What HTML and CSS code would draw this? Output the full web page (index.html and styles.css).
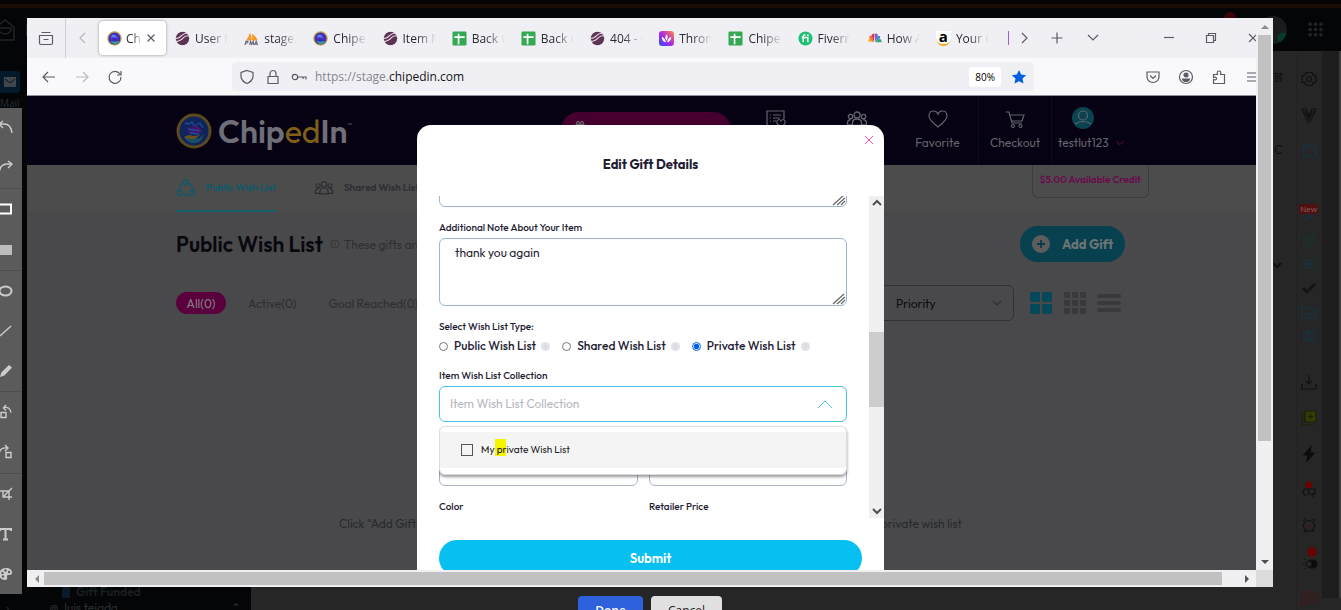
FILE: index.html
```html
<!DOCTYPE html>
<html lang="en">
<head>
<meta charset="utf-8">
<title>ChipedIn – Edit Gift Details</title>
<link rel="stylesheet" href="styles.css">
</head>
<body>
<svg class="defs" aria-hidden="true">
  <defs>
    <symbol id="fav-chip" viewBox="0 0 16 16"><circle cx="8" cy="8" r="7" fill="#3b2db0" stroke="#b9a24a" stroke-width="1.4"/><path d="M4 5q3-3 7 0l1 4q-4-3-8 0z" fill="#6a3fe0"/><path d="M4 10q4 3 9 0-1 3-4 3.600-4 0-5-3.600z" fill="#2fb0a0"/><path d="M5 5l4 1" stroke="#36b9e8" stroke-width="1.500"/></symbol>
    <symbol id="fav-ball" viewBox="0 0 16 16"><circle cx="8" cy="8" r="7.200" fill="#5d3354"/><path d="M.5 8q4 0 6.500-3t7-2.500M.5 11q5 0 8-3.500t7-2" fill="none" stroke="#e7d9e5" stroke-width="1.200"/></symbol>
    <symbol id="fav-sheet" viewBox="0 0 16 16"><rect x=".5" y=".5" width="15" height="15" rx="1.500" fill="#34a853"/><path d="M7 3v11M2.500 6.500h11" stroke="#fff" stroke-width="1.800"/></symbol>
    <symbol id="fav-pma" viewBox="0 0 16 16"><path d="M2 10Q5 7 6 2q3 3 2 8zM8.500 10Q9 6 8.500 3q5 3 6 7z" fill="#f59a23"/><path d="M1 15l1-4h2q1 2-2 2M6 15l1-4 1 3 2-3v4M11 15l2-4 1.500 4M12 14h2" fill="none" stroke="#6b6b80" stroke-width="1.200"/></symbol>
    <symbol id="fav-throne" viewBox="0 0 16 16"><linearGradient id="tg" x1="0" y1="1" x2="1" y2="0"><stop offset="0" stop-color="#2b4bff"/><stop offset=".5" stop-color="#b02be0"/><stop offset="1" stop-color="#ff8a3c"/></linearGradient><rect width="16" height="16" rx="3.500" fill="url(#tg)"/><path d="M8 3.500q2.500 3 0 7-2.500-4 0-7zM3 6.500q3 .5 4.500 5.500Q3 12 3 6.500zM13 6.500q-3 .5-4.500 5.500Q13 12 13 6.500z" fill="#fff"/></symbol>
    <symbol id="fav-fiverr" viewBox="0 0 16 16"><circle cx="8" cy="8" r="7.500" fill="#1dbf73"/><path d="M5.500 12V6q0-2 2.500-2M4 7h6.500v5" fill="none" stroke="#fff" stroke-width="1.500"/><circle cx="10.500" cy="4.500" r="1" fill="#fff"/></symbol>
    <symbol id="fav-nbc" viewBox="0 0 16 16"><path d="M7 12L1 11q0-3 3-3z" fill="#f0b323"/><path d="M7 12L2 7q1-3 3.500-2z" fill="#f0743a"/><path d="M7.500 12L5 5q1-3 3-2z" fill="#d8324a"/><path d="M8.500 12L8.500 3q3-1 3 2z" fill="#7a5bd0"/><path d="M9 12l2.500-7q3 0 2.500 2z" fill="#2f80d8"/><path d="M9 12l4-4q3 1 2.500 4z" fill="#2fa86a"/></symbol>
    <symbol id="chev" viewBox="0 0 12 12"><path d="M2 4l4 4 4-4" fill="none" stroke="currentColor" stroke-width="1.200"/></symbol>
    <symbol id="chev-bold" viewBox="0 0 12 12"><path d="M2 4l4 4 4-4" fill="none" stroke="currentColor" stroke-width="2"/></symbol>
    <symbol id="grip" viewBox="0 0 14 12"><path d="M1 11L12 1M5 11l8-7M9 11l4-4" fill="none" stroke="#666" stroke-width="1.200"/></symbol>
    <symbol id="info" viewBox="0 0 10 10"><circle cx="5" cy="5" r="5" fill="#e1e1e8"/><path d="M5 4.500v3M5 2.500v1" stroke="#cfcfd9"/></symbol>
    <symbol id="people" viewBox="0 0 22 18"><g fill="none" stroke="currentColor" stroke-width="1.300"><circle cx="11" cy="5" r="3"/><circle cx="4.500" cy="6.500" r="2.200"/><circle cx="17.500" cy="6.500" r="2.200"/><path d="M6.500 15.500V13q0-4 4.500-4t4.500 4v2.500zM6.500 15H1.500v-2q0-3 3.500-3.500M15.500 15h5v-2q0-3-3.500-3.500"/></g></symbol>
  </defs>
</svg>

<div class="backdrop" aria-hidden="true">
  <div class="bd-top">
    <svg class="bd-logo" viewBox="0 0 24 24"><path d="M2 9l9-7 9 7v13H2zM5 10h12v3q-6 6-12 0z" fill="none" stroke="currentColor" stroke-width="1.500"/></svg>
    <span class="bd-line"></span>
    <span class="bd-alert"></span>
    <span class="bd-avatar"></span>
    <svg class="bd-apps" viewBox="0 0 14 14"><g fill="currentColor"><circle cx="2" cy="2" r="1.700"/><circle cx="7" cy="2" r="1.700"/><circle cx="12" cy="2" r="1.700"/><circle cx="2" cy="7" r="1.700"/><circle cx="7" cy="7" r="1.700"/><circle cx="12" cy="7" r="1.700"/><circle cx="2" cy="12" r="1.700"/><circle cx="7" cy="12" r="1.700"/><circle cx="12" cy="12" r="1.700"/></g></svg>
  </div>
  <div class="bd-body">
    <div class="bd-left">
      <div class="bd-mail"><span class="bd-mail-tile"><svg viewBox="0 0 12 10"><path d="M0 0h12v10H0z" fill="#3f474c"/><path d="M1 2l5 4 5-4" fill="none" stroke="#07141d"/></svg></span>Mail</div>
      <div class="bd-chats">
        <div class="bd-funded"><i></i>Gift Funded</div>
        <div class="bd-user"><span>›</span><b>@</b>luis tejada<em>⌃</em></div>
      </div>
    </div>
    <div class="bd-side">
      <svg viewBox="0 0 14 14"><path d="M0 3h10M2 3v9h6V3M4 5v5M6 5v5" fill="none" stroke="currentColor"/></svg>
      <span>C</span>
      <svg viewBox="0 0 12 12"><use href="#chev-bold"/></svg>
    </div>
    <div class="bd-rail">
      <div class="rail-wide">
        <svg viewBox="0 0 16 16"><path d="M5 1.500h6L12 4l3 1v6l-3 1-1 2.500H5L4 12l-3-1V5l3-1z"/><circle cx="8" cy="8" r="2.500"/></svg>
        <svg viewBox="0 0 16 16"><path d="M1 2h4l3 7 3-7h4L9 15H7zM4 4l4 8 4-8"/></svg>
        <svg class="c-blue" viewBox="0 0 16 16"><path d="M3 2h10l2 2v9H3zM1 5h3M1 8h3M1 11h3M3 5h12"/></svg>
      </div>
      <div class="rail-tight">
        <div class="rail-new"><b>New</b><svg class="c-blue" viewBox="0 0 16 8"><path d="M5 7q3 0 3-5M8 2h4v3"/></svg></div>
        <svg class="c-green" viewBox="0 0 16 16"><path d="M3 6h5v4h5V2h-3v4M3 6v8h7v-4"/></svg>
        <svg class="c-blue" viewBox="0 0 16 16"><circle cx="5" cy="8" r="4"/><circle cx="11" cy="8" r="4"/><path d="M5 8h6"/></svg>
        <svg class="c-grey" viewBox="0 0 16 16"><path d="M2 8l4 4 8-8" stroke-width="3"/></svg>
        <svg class="c-blue" viewBox="0 0 16 16"><path d="M1 3h5l1 2h8v9H1zM5 12V9M8 12V8M11 12V7"/></svg>
        <svg class="c-blue" viewBox="0 0 16 16"><path d="M7 3q-4-1-4 3-3 2 0 4 0 4 4 3zM9 3q4-1 4 3 3 2 0 4 0 4-4 3z"/></svg>
      </div>
      <div class="rail-wide">
        <svg viewBox="0 0 16 16"><path d="M1 10v5h14v-5M8 1v9M5 7l3 3 3-3"/></svg>
        <svg class="c-olive" viewBox="0 0 16 16"><path d="M4 1h11v11H4z" fill="#343a08"/><path d="M1 4v11h11M9.500 4v5M7 6.500h5"/></svg>
        <svg viewBox="0 0 16 16"><path d="M10 1L3 9h4l-1 6 7-8H9z" fill="#0c0c0c" stroke="#0c0c0c"/></svg>
        <svg viewBox="0 0 16 16"><path d="M6 7q-5 0-4 4l3 3M7 7h7v5H8zM12 12v3"/><circle cx="8" cy="3" r="3.500" fill="#6b0000" stroke="none"/></svg>
        <svg class="c-red" viewBox="0 0 16 16"><circle cx="8" cy="8" r="5.500" stroke="#111"/><path d="M5 8l3 2 3-3"/><path d="M2 3l2-2M14 3l-2-2M3 14l2-2M13 14l-2-2" stroke="#111"/></svg>
        <svg viewBox="0 0 16 16"><path d="M8 6h4a3 3 0 010 8H8" fill="#0c0c0c"/><circle cx="8" cy="10" r="3" fill="#262626"/><path d="M1 10h2M3 5l1 1M3 15l1-1"/><circle cx="11" cy="-2" r="4.500" fill="#6b0000" stroke="none"/></svg>
        <svg class="c-red" viewBox="0 0 16 16"><path d="M1 2h14v10H5l-4 3zM4 5h8M4 8h8"/></svg>
      </div>
    </div>
    <div class="bd-scroll"></div>
  </div>
</div>

<aside class="tools" aria-label="Drawing tools">
  <button aria-label="Undo"><svg viewBox="0 0 16 16"><path d="M5 1L1 4l4 4M1 4h5q7 0 8 9"/></svg></button>
  <button class="end" aria-label="Redo"><svg viewBox="0 0 16 16"><path d="M10 1l4 3-4 4M14 4H9Q2 4 1 13"/></svg></button>
  <button aria-label="Rectangle"><svg viewBox="0 0 16 16"><path d="M1 3.500h12v9H1z" stroke="#fff" stroke-width="2"/></svg></button>
  <button class="end" aria-label="Filled rectangle"><svg viewBox="0 0 16 16"><path d="M1 3h13v10H1z" fill="#bdbdbd" stroke="none"/></svg></button>
  <button aria-label="Ellipse"><svg viewBox="0 0 16 16"><ellipse cx="7.500" cy="8" rx="6" ry="4.500" stroke-width="2"/></svg></button>
  <button aria-label="Line"><svg viewBox="0 0 16 16"><path d="M2 13L13 3"/></svg></button>
  <button class="end" aria-label="Pencil"><svg viewBox="0 0 16 16"><path d="M3 13l1-3 7-7 2 1.500L6 12z" fill="#ccc"/></svg></button>
  <button aria-label="Rotate left"><svg viewBox="0 0 16 16"><path d="M3 8.500h5v5H3zM8 1L5.500 4 8 6.500M6 3.500q6-1 7 5"/></svg></button>
  <button class="end" aria-label="Rotate right"><svg viewBox="0 0 16 16"><path d="M8 8.500h5v5H8zM7 1l3 3-3 3M9 4Q2 3 1 10"/></svg></button>
  <button aria-label="Crop"><svg viewBox="0 0 16 16"><path d="M1 5h10v9M5 5v6h9M6 10l8-8"/></svg></button>
  <button aria-label="Text"><svg viewBox="0 0 16 16"><path d="M2 5V3h11v2M7.500 3v11M5 13.500h5" stroke-width="2"/></svg></button>
  <button aria-label="Palette"><svg viewBox="0 0 16 16"><path d="M8 2c4 0 6 2 6 5 0 3-5 1-5 3s1 4-2 4c-4 0-6-3-6-6s3-6 7-6z" fill="#ccc" stroke="none"/><g fill="#5b5b5b" stroke="none"><circle cx="4.500" cy="7" r="1.200"/><circle cx="7.500" cy="4.500" r="1.200"/><circle cx="11" cy="6" r="1.200"/><circle cx="5" cy="10.500" r="1.200"/></g></svg></button>
</aside>

<main class="editor">
  <div class="frame">
    <div class="capture">
      <div class="browser">
        <div class="tabbar">
          <button class="tb-view" aria-label="Recent browsing"><svg viewBox="0 0 16 16"><path d="M1.500 5.500h13V13q0 1.500-1.500 1.500H3Q1.500 14.500 1.500 13zM3.500 2.500h9M5.500 9.500h5"/></svg></button>
          <button class="tb-prev" aria-label="Scroll tabs left"><svg viewBox="0 0 16 16"><path d="M10 3L5 8l5 5"/></svg></button>
          <div class="tabs">
            <div class="tab active"><svg><use href="#fav-chip"/></svg><span>Chip</span><button aria-label="Close tab"><svg viewBox="0 0 10 10"><path d="M1.500 1.500l7 7M8.500 1.500l-7 7"/></svg></button></div>
            <div class="tab"><svg><use href="#fav-ball"/></svg><span>User M</span></div>
            <div class="tab"><svg><use href="#fav-pma"/></svg><span>stage.</span></div>
            <div class="tab"><svg><use href="#fav-chip"/></svg><span>Chipe</span></div>
            <div class="tab"><svg><use href="#fav-ball"/></svg><span>Item M</span></div>
            <div class="tab"><svg><use href="#fav-sheet"/></svg><span>Back O</span></div>
            <div class="tab"><svg><use href="#fav-sheet"/></svg><span>Back o</span></div>
            <div class="tab"><svg><use href="#fav-ball"/></svg><span>404 - C</span></div>
            <div class="tab"><svg><use href="#fav-throne"/></svg><span>Thron</span></div>
            <div class="tab"><svg><use href="#fav-sheet"/></svg><span>Chipe</span></div>
            <div class="tab"><svg><use href="#fav-fiverr"/></svg><span>Fiverr</span></div>
            <div class="tab"><svg><use href="#fav-nbc"/></svg><span>How A</span></div>
            <div class="tab"><i class="amz">a</i><span>Your O</span></div>
          </div>
          <div class="tb-actions">
            <button aria-label="Scroll tabs right"><svg viewBox="0 0 16 16"><path d="M6 3l5 5-5 5"/></svg></button>
            <button aria-label="New tab"><svg viewBox="0 0 16 16"><path d="M8 2.500v11M2.500 8h11"/></svg></button>
            <button aria-label="List all tabs"><svg viewBox="0 0 16 16"><path d="M3 5l5 5 5-5"/></svg></button>
          </div>
          <div class="win-actions">
            <button aria-label="Minimize"><svg viewBox="0 0 16 16"><path d="M3 7.500h10"/></svg></button>
            <button aria-label="Restore"><svg viewBox="0 0 16 16"><path d="M3.500 5.500h7v7h-7zM5.500 5.500v-2h7v7h-2"/></svg></button>
            <button aria-label="Close window"><svg viewBox="0 0 16 16"><path d="M4 4l8 8M12 4l-8 8"/></svg></button>
          </div>
        </div>
        <div class="navbar">
          <div class="nav-buttons">
            <button aria-label="Back"><svg viewBox="0 0 16 16"><path d="M14 8H2.500M7 3L2 8l5 5"/></svg></button>
            <button class="off" aria-label="Forward"><svg viewBox="0 0 16 16"><path d="M2 8h11.500M9 3l5 5-5 5"/></svg></button>
            <button aria-label="Reload"><svg viewBox="0 0 16 16"><path d="M13 5a6 6 0 101 3M14 2v4h-4"/></svg></button>
          </div>
          <div class="urlbar">
            <svg viewBox="0 0 16 16"><path d="M8 1.500l6 2V8q-1 4.500-6 6.500Q3 12.500 2 8V3.500z"/></svg>
            <svg viewBox="0 0 16 16"><path d="M3 7.500h10v7H3zM5 7V4.500a3 3 0 016 0V7"/></svg>
            <svg viewBox="0 0 16 16"><circle cx="4" cy="8" r="2.700"/><path d="M7 8h8v2.500M12 8v2"/></svg>
            <span class="url">https://stage.<b>chipedin.com</b></span>
            <span class="zoom">80%</span>
            <svg class="star" viewBox="0 0 16 16"><path d="M8 1l2.200 4.600 5 .6-3.700 3.400 1 5L8 12.200l-4.500 2.400 1-5L.8 6.200l5-.6z"/></svg>
          </div>
          <div class="nav-tools">
            <button aria-label="Pocket"><svg viewBox="0 0 16 16"><path d="M2 3h12v5a6 5.500 0 01-12 0zM5 6.500l3 3 3-3"/></svg></button>
            <button aria-label="Account"><svg viewBox="0 0 16 16"><circle cx="8" cy="8" r="6.500"/><circle cx="8" cy="6" r="2" fill="#5b5b66"/><path d="M4.500 10h7q-1 2.500-3.500 2.500T4.500 10z" fill="#5b5b66"/></svg></button>
            <button aria-label="Extensions"><svg viewBox="0 0 16 16"><path d="M2.500 14.500v-4q3 1 3-1t-3-1v-3h4q-1-3.500 1.500-3.500T9.500 5.500h4v9z"/></svg></button>
            <button aria-label="Menu"><svg viewBox="0 0 16 16"><path d="M3 4h11M3 8h11M3 12h11"/></svg></button>
          </div>
        </div>

        <div class="site">
          <header class="site-head">
            <div class="wrap head-row">
              <a class="logo" href="#">
                <svg viewBox="0 0 36 36"><circle cx="18" cy="18" r="16" fill="#10245c" stroke="#5c4a1e" stroke-width="3"/><path d="M8 24q6-4 10 0t10-3q-2 9-10 9-7 0-10-6z" fill="#174f68"/><path d="M8 24q5-3 9-1l8-1-7 4q-6 1-10-2z" fill="#68501c"/><path d="M11 14l10 1 3 6H13z" fill="#43106a"/><path d="M9 10l4 1 3-2 2 4 6-3 3 5M12 16l12 2M14 20l9 1" fill="none" stroke="#1f4c94" stroke-width="1.300"/><path d="M18 12l8 7" stroke="#6b0f70" stroke-width="1.500"/></svg>
                <span>Chip<em>ed</em>In<sup>™</sup></span>
              </a>
              <nav class="head-nav">
                <a class="pill" href="#" aria-label="Gifts"><svg viewBox="0 0 14 14"><path d="M2 5h10v8H2zM7 5Q2 4 4 2t3 3q1-5 3-3T7 5z"/></svg></a>
                <a href="#" aria-label="Wish lists"><svg viewBox="0 0 22 20"><path d="M10 17H2V2h17v8M5 6h1M8 6h8M5 9h1M8 9h7M5 12h1M8 12h3M16 18q-5-3-4-6 2-3 4 0 2-3 4 0 1 3-4 6z"/></svg></a>
                <a href="#" aria-label="Friends"><svg viewBox="0 0 22 18"><use href="#people"/></svg></a>
                <a href="#"><svg viewBox="0 0 22 20"><path d="M11 18Q2 11 2 7q0-5 4.500-5Q10 2 11 5q1-3 4.500-3Q20 2 20 7q0 4-9 11z"/></svg>Favorite</a>
                <a class="ruled" href="#"><svg viewBox="0 0 22 20"><path d="M2 3h3l3 11h10M6 6h14l-2 6H8"/><circle cx="9" cy="17" r="1.500"/><circle cx="16.500" cy="17" r="1.500"/></svg>Checkout</a>
                <a class="account" href="#"><svg viewBox="0 0 22 22"><circle cx="11" cy="11" r="11" fill="#0b4350" stroke="none"/><circle cx="11" cy="8.500" r="4.500"/><path d="M3 17q8-5 16 0"/></svg><span>testlut123 <svg class="tiny"><use href="#chev"/></svg></span></a>
              </nav>
            </div>
          </header>
          <div class="strip">
            <nav class="lists">
              <a class="current" href="#"><svg viewBox="0 0 20 20"><circle cx="10" cy="4" r="2.500"/><circle cx="4" cy="15" r="2.500"/><circle cx="16" cy="15" r="2.500"/><path d="M7.500 5Q3 8 3 12.500M12.500 5Q17 8 17 12.500M6.500 16q3.500 2.500 7 0"/></svg>Public Wish List</a>
              <a href="#"><svg viewBox="0 0 22 18"><use href="#people"/></svg>Shared Wish Lists</a>
            </nav>
            <div class="credit">$5.00 Available Credit</div>
          </div>
          <section class="wrap content">
            <div class="title-row">
              <h1>Public Wish List</h1>
              <p><svg viewBox="0 0 10 10"><circle cx="5" cy="5" r="4"/><path d="M5 4.500v3M5 2.500v1"/></svg>These gifts are public</p>
              <button class="add"><svg viewBox="0 0 18 18"><circle cx="9" cy="9" r="9" fill="#5d5d5d"/><path d="M9 5v8M5 9h8" stroke="#073b4a" stroke-width="1.800"/></svg>Add Gift</button>
            </div>
            <div class="filter-row">
              <button class="chip on">All(0)</button>
              <button class="chip">Active(0)</button>
              <button class="chip">Goal Reached(0)</button>
              <label class="sort"><select aria-label="Sort by"><option>Priority</option></select><svg><use href="#chev"/></svg></label>
              <div class="views">
                <button aria-label="Large grid"><svg viewBox="0 0 24 24"><g fill="#04485a"><rect x="1" y="1" width="10" height="10" rx="2"/><rect x="13" y="1" width="10" height="10" rx="2"/><rect x="1" y="13" width="10" height="10" rx="2"/><rect x="13" y="13" width="10" height="10" rx="2"/></g></svg></button>
                <button aria-label="Small grid"><svg viewBox="0 0 24 24"><path d="M1 4h22M1 12h22M1 20h22" stroke="#38383d" stroke-width="6" stroke-dasharray="6 2"/></svg></button>
                <button aria-label="List"><svg viewBox="0 0 24 24"><path d="M2 5h20M2 12h20M2 19h20" stroke="#38383d" stroke-width="4" stroke-linecap="round"/></svg></button>
              </div>
            </div>
            <p class="empty"><span>Click “Add Gift”</span><span>private wish list</span></p>
          </section>

          <div class="overlay">
            <section class="modal" role="dialog" aria-labelledby="dlg-title">
              <button class="close" aria-label="Close"><svg viewBox="0 0 10 10"><path d="M1 1l8 8M9 1L1 9"/></svg></button>
              <h2 id="dlg-title">Edit Gift Details</h2>
              <div class="scroller">
                <form class="form">
                  <div class="area"><textarea aria-label="Item description"></textarea><svg><use href="#grip"/></svg></div>
                  <div class="field">
                    <label for="note">Additional Note About Your Item</label>
                    <div class="area"><textarea id="note">thank you again</textarea><svg><use href="#grip"/></svg></div>
                  </div>
                  <fieldset class="field">
                    <legend>Select Wish List Type:</legend>
                    <div class="radios">
                      <label><input type="radio" name="type">Public Wish List<svg><use href="#info"/></svg></label>
                      <label><input type="radio" name="type">Shared Wish List<svg><use href="#info"/></svg></label>
                      <label><input type="radio" name="type" checked>Private Wish List<svg><use href="#info"/></svg></label>
                    </div>
                  </fieldset>
                  <div class="field combo">
                    <label for="coll">Item Wish List Collection</label>
                    <div class="combo-box"><input id="coll" type="text" placeholder="Item Wish List Collection"><svg viewBox="0 0 16 10"><path d="M1 9l7-7 7 7"/></svg></div>
                    <div class="menu"><label><input type="checkbox"><span>My <mark>pr</mark>ivate Wish List</span></label></div>
                  </div>
                  <div class="pair"><input type="text" aria-label="Quantity"><input type="text" aria-label="Size"></div>
                  <div class="pair labels"><span>Color</span><span>Retailer Price</span></div>
                </form>
                <div class="bar"><svg class="up"><use href="#chev-bold"/></svg><i></i><svg><use href="#chev-bold"/></svg></div>
              </div>
              <button class="submit">Submit</button>
            </section>
          </div>
        </div>
      </div>
    </div>
    <div class="vbar"><i class="arrow up"></i><div class="track"><b></b></div><i class="arrow down"></i></div>
    <div class="hbar"><i class="arrow left"></i><div class="track"><b></b></div><i class="arrow right"></i></div>
    <div class="corner"></div>
  </div>
  <footer class="actions"><button class="done">Done</button><button class="cancel">Cancel</button></footer>
</main>
</body>
</html>
```
FILE: styles.css
```css
* { box-sizing: border-box; }
body { margin: 0; height: 100vh; overflow: hidden; position: relative; background: #262626; font-family: Outfit, Lato, "Open Sans", sans-serif; font-size: 12px; }
button { border: 0; padding: 0; margin: 0; background: none; font: inherit; color: inherit; display: flex; align-items: center; justify-content: center; }
a { color: inherit; text-decoration: none; }
h1, h2, p { margin: 0; }
input, textarea, select { font: inherit; margin: 0; }
svg { flex: none; }
.defs { position: absolute; width: 0; height: 0; }

/* dimmed application behind the editor */
.backdrop { position: absolute; inset: 0; display: flex; flex-direction: column; }
.bd-top { height: 51px; flex: none; display: flex; align-items: center; padding: 8px 18px 0 0; background: linear-gradient(#040404 4px, #1c0c06 4px, #1c0c06 8px, #030507 8px); color: #222527; }
.bd-logo { width: 24px; height: 24px; margin-left: -6px; }
.bd-line { width: 1px; height: 12px; margin-left: 8px; background: #222527; }
.bd-alert { width: 12px; height: 12px; margin: -24px 23px 0 auto; border-radius: 50%; background: #3a0508; }
.bd-avatar { width: 28px; height: 28px; border-radius: 50%; background: radial-gradient(circle at 24px 22px, #063a2c 5px, #191b1c 6px); }
.bd-apps { width: 15px; height: 15px; margin-left: 21px; }
.bd-body { flex: 1; display: flex; min-height: 0; }
.bd-left { width: 251px; background: #030507; display: flex; flex-direction: column; justify-content: space-between; color: #2a2e31; }
.bd-mail { width: 27px; padding-top: 20px; font: 10px/20px "Open Sans", sans-serif; }
.bd-mail-tile { display: flex; align-items: center; justify-content: center; width: 20px; height: 22px; border-radius: 0 4px 4px 0; background: #04192a; }
.bd-mail-tile svg { width: 12px; height: 10px; }
.bd-chats { font-size: 12px; line-height: 16px; margin-bottom: -6px; }
.bd-funded { display: flex; align-items: center; gap: 6px; padding-left: 62px; font-weight: 600; color: #1a1f22; }
.bd-funded i { width: 8px; height: 12px; background: #0a1a28; }
.bd-user { display: flex; padding: 0 10px 0 6px; }
.bd-user b { margin: 0 6px 0 40px; font-weight: normal; }
.bd-user em { margin-left: auto; font-style: normal; }
.bd-side { width: 23px; margin-left: auto; padding: 19px 0 0; display: flex; flex-direction: column; gap: 58px; color: #0e0e0e; border-right: 1px solid #222; }
.bd-side svg { width: 12px; height: 14px; }
.bd-side svg:last-child { margin-top: 43px; margin-left: -3px; }
.bd-rail { width: 25px; padding: 10px 2px 0 0; color: #101010; overflow: hidden; }
.bd-rail svg { width: 16px; height: 16px; fill: none; stroke: currentColor; stroke-width: 1.2; overflow: visible; }
.rail-wide, .rail-tight { display: grid; justify-items: center; align-items: center; grid-auto-rows: 36px; }
.rail-tight { grid-auto-rows: 24px; margin: 35px 0 16px; }
.rail-new { width: 19px; height: 24px; }
.rail-new b { display: block; width: 19px; height: 10px; background: #4f1010; color: #8a6060; font: 8px/10px "Open Sans", sans-serif; text-align: center; }
.rail-new svg { height: 8px; display: block; }
.c-blue { color: #173442; } .c-green { color: #12392a; } .c-grey { color: #141414; } .c-olive { color: #1c2004; } .c-red { color: #4a1518; }
.bd-scroll { width: 19px; margin-bottom: 12px; background: #1e1e1e; border-right: 2px solid #3c3c3c; }

/* tools */
.tools { position: absolute; z-index: 2; top: 108px; bottom: 16px; left: 0; width: 22px; background: #5b5b5b; display: flex; flex-direction: column; overflow: hidden; }
.tools::before { content: ""; }
.tools button { flex: 1; width: 22px; justify-content: flex-end; padding-right: 8px; }
.tools .end { border-bottom: 1px solid #4e4e4e; }
.tools svg { width: 16px; height: 16px; fill: none; stroke: #ccc; stroke-width: 1.4; }

/* editor */
.editor { position: relative; height: 100%; padding: 18px 68px 0 27px; display: flex; flex-direction: column; }
.frame { flex: 1; min-height: 0; display: grid; grid-template: minmax(0, 1fr) 17px / minmax(0, 1fr) 17px; background: #f0f0f2; }
.capture { overflow: hidden; }
.browser { width: calc(100% + 18px); height: 100%; display: flex; flex-direction: column; }
.vbar, .hbar { display: flex; align-items: center; padding: 0 2px; background: #f0f0f2; }
.vbar { flex-direction: column; padding: 0; }
.track { flex: 1; align-self: stretch; padding: 2px 0; }
.vbar .track { padding: 0 2px; }
.track b { display: block; background: #c1c1c1; width: 98.6%; height: 100%; }
.vbar .track b { width: 100%; height: 78.4%; }
.arrow { width: 17px; height: 17px; display: grid; place-items: center; }
.hbar .arrow { width: 15px; }
.arrow::after { content: ""; border: 4px solid transparent; border-top: 4px solid #505050; border-bottom: 0; }
.arrow.up::after { rotate: 180deg; border-top-color: #8c8c8c; }
.arrow.left::after { rotate: 90deg; border-top-color: #8c8c8c; }
.arrow.right::after { rotate: -90deg; }
.corner { background: #dcdcdc; }
.actions { height: 23px; padding-top: 9px; display: flex; justify-content: center; gap: 8px; overflow: hidden; font-family: "Open Sans", sans-serif; font-size: 12px; }
.actions button { height: 28px; border-radius: 4px 4px 0 0; }
.done { width: 65px; background: #2d62dc; color: #fff; font-weight: 600; }
.cancel { width: 71px; background: #e0e0e0; color: #222; }

/* browser chrome */
.tabbar { height: 40px; flex: none; display: flex; align-items: center; background: #f0f0f4; font-family: "Open Sans", sans-serif; color: #2b2a33; }
.tabbar svg, .navbar svg { width: 16px; height: 16px; fill: none; stroke: #5b5b66; stroke-width: 1.2; }
.tb-view { width: 39px; height: 40px; border-right: 1px solid #cfcfd8; }
.tb-prev { width: 33px; opacity: .4; }
.tabs { flex: 1; display: flex; min-width: 0; height: 34px; }
.tab { flex: 1; min-width: 0; display: flex; align-items: center; gap: 5px; padding: 0 8px; }
.tabbar .tab > svg { stroke: none; width: 15px; height: 15px; }
.tab span { flex: 1; min-width: 0; overflow: hidden; white-space: nowrap; mask-image: linear-gradient(90deg, #000 40%, transparent); }
.tab.active { flex: 0 1 67px; margin-right: 1px; padding-right: 10px; gap: 4px; background: #fff; border-radius: 4px; box-shadow: 0 0 3px #0006; }
.tabbar .active button svg { width: 10px; height: 10px; }
.amz { width: 15px; height: 15px; font: bold 15px/11px "Open Sans", sans-serif; text-align: center; color: #000; border-bottom: 2px solid #f5a623; border-radius: 0 0 8px 8px; background: #fff; }
.tb-actions { display: flex; margin-left: 11px; border-left: 1px solid #9a5fd0; height: 14px; align-items: center; }
.tb-actions button { width: 30px; }
.tb-actions button + button { width: 36px; }
.win-actions { display: flex; margin-left: 37px; }
.win-actions button { width: 42px; }
.navbar { height: 38px; flex: none; display: flex; align-items: center; background: #f9f9fb; border-bottom: 1px solid #8f8f9d; }
.nav-buttons { display: flex; padding-left: 5px; width: 205px; }
.nav-buttons button { width: 33px; }
.off { opacity: .4; }
.urlbar { flex: 1; height: 29px; display: flex; align-items: center; gap: 10px; padding: 0 7px; border-radius: 4px; background: #f0f0f4; font: 12px "Open Sans", sans-serif; }
.url { flex: 1; margin-left: -2px; color: #85858c; }
.url b { font-weight: normal; color: #15141a; }
.zoom { padding: 2px 6px; background: #fff; border-radius: 3px; font-size: 10px; line-height: 16px; }
.navbar .star { fill: #0060df; stroke: none; }
.nav-tools { display: flex; padding-left: 102px; padding-right: 6px; }
.nav-tools button { width: 33px; }

/* dimmed site */
.site { flex: 1; min-height: 0; position: relative; background: #49494b; overflow: hidden; }
.wrap { width: 100%; max-width: 949px; margin: 0 auto; }
.site-head { height: 69px; background: #060213; color: #65636d; }
.head-row { display: flex; justify-content: space-between; height: 100%; }
.logo { display: flex; align-items: center; gap: 6px; font-size: 32px; font-weight: 600; color: #706e78; }
.logo svg { width: 36px; height: 36px; }
.logo em { font-style: normal; font-weight: normal; color: #806018; }
.logo sup { font-size: 6px; font-weight: normal; vertical-align: 16px; }
.head-nav { display: flex; }
.head-nav a { width: 81px; display: flex; flex-direction: column; align-items: center; gap: 5px; padding-top: 12px; line-height: 16px; }
.head-nav svg { width: 22px; height: 22px; fill: none; stroke: currentColor; stroke-width: 1.2; }
.head-nav .pill { width: 170px; height: 36px; margin: 16px 4px 0 0; padding: 8px 12px; border-radius: 18px; background: #45002f; align-items: flex-start; }
.head-nav .pill svg { width: 14px; height: 14px; }
.head-nav .ruled { width: 74px; border: solid #0c0a1c; border-width: 0 1px; }
.head-nav .account { width: 73px; padding: 11px 0 0 6px; gap: 6px; align-items: flex-start; white-space: nowrap; }
.head-nav .account > svg { margin-left: 14px; }
.account span { display: flex; align-items: center; gap: 6px; }
.head-nav .tiny { width: 10px; height: 10px; color: #6b0d4c; }
.strip { height: 47px; padding: 0 125px 0 149px; display: flex; justify-content: space-between; align-items: flex-start; background: #4c4c4c; font-size: 10px; font-weight: 600; color: #2c2d33; }
.lists { display: flex; gap: 38px; }
.lists a { height: 47px; display: flex; align-items: center; gap: 10px; border-bottom: 2px solid transparent; }
.lists .current { color: #0f5a6b; border-color: #17606f; }
.lists svg { width: 20px; height: 20px; fill: none; stroke: currentColor; stroke-width: 1.3; }
.credit { height: 33px; padding: 0 7px; line-height: 30px; border: 1px solid #3c3c42; border-top: 0; border-radius: 0 0 6px 6px; color: #6a0a4c; }
.title-row { display: flex; align-items: center; padding-top: 14px; color: #2e2e34; }
h1 { font-size: 21px; font-weight: 600; line-height: 36px; color: #08080f; }
.title-row p { margin-left: 7px; display: flex; align-items: center; gap: 4px; }
.title-row p svg { width: 10px; height: 10px; fill: none; stroke: currentColor; stroke-width: .7; }
.add { width: 105px; height: 36px; margin-left: auto; gap: 12px; border-radius: 18px; background: #07414f; color: #6c7476; font-size: 13px; font-weight: bold; }
.add svg { width: 18px; height: 18px; }
.filter-row { display: flex; align-items: center; padding: 23px 4px 0 0; color: #2e2e34; }
.chip { height: 22px; margin-right: 32px; }
.chip.on { width: 50px; margin-right: 22px; border-radius: 11px; background: #5a003c; color: #858085; }
.sort { display: flex; align-items: center; width: 140px; height: 36px; margin-left: auto; margin-right: 15px; padding: 0 10px 0 21px; border: 1px solid #313136; border-radius: 6px; }
.sort select { flex: 1; appearance: none; border: 0; padding: 0; background: none; color: #0b0b10; }
.sort svg { width: 12px; height: 12px; }
.views { display: flex; gap: 10px; }
.views svg { width: 24px; height: 24px; display: block; }
.empty { display: flex; justify-content: space-between; max-width: 623px; margin: 194px auto 0; color: #26292e; line-height: 18px; }

/* dialog */
.overlay { position: absolute; inset: 29px 0 0; display: flex; justify-content: center; align-items: flex-start; }
.modal { position: relative; width: 467px; padding: 30px 0 20px 22px; border-radius: 14px; background: #fff; color: #1f1d33; }
.close { position: absolute; top: 10px; right: 10px; }
.close svg { width: 10px; height: 10px; stroke: #f052b4; }
h2 { font-size: 13px; line-height: 18px; padding-right: 22px; text-align: center; }
.scroller { height: 322px; margin-top: 23px; display: flex; justify-content: space-between; overflow: hidden; }
.form { width: 408px; margin-top: -57px; display: flex; flex-direction: column; gap: 14px; font-size: 10px; line-height: 14px; font-weight: 500; }
.field { display: flex; flex-direction: column; gap: 3px; border: 0; padding: 0; margin: 0; min-width: 0; }
.field legend { padding: 0; }
.area { position: relative; display: flex; }
.area textarea { width: 100%; height: 68px; padding: 6px 15px; resize: none; border: 1px solid #9db4cf; border-radius: 6px; color: #1f1d33; font-size: 12px; line-height: 16px; font-weight: normal; }
.area svg { position: absolute; right: 1px; bottom: 1px; width: 14px; height: 12px; }
.radios { display: flex; gap: 12px; padding: 4px 0 1px; font-size: 12px; line-height: 16px; }
.radios label { display: flex; align-items: center; }
.radios input { width: 9px; height: 9px; margin-right: 6px; accent-color: #0060df; }
.radios svg { width: 9px; height: 9px; margin-left: 5px; }
.combo { position: relative; }
.combo-box { height: 36px; display: flex; align-items: center; padding: 0 13px 0 10px; border: 1px solid #48c4e4; border-radius: 6px; }
.combo-box input { flex: 1; border: 0; padding: 0; outline: 0; font-size: 12px; font-weight: normal; }
.combo-box input::placeholder { color: #b6b6be; }
.combo-box svg { width: 16px; height: 10px; fill: none; stroke: #48c4e4; }
.menu { position: absolute; z-index: 1; top: calc(100% + 4px); left: 0; right: 0; padding: 5px 0 6px; border-radius: 6px; border: 1px solid #dcdce6; background: #fff; box-shadow: 0 2px 3px #0006; }
.menu label { height: 36px; display: flex; align-items: center; gap: 8px; padding-left: 21px; background: #f4f4f4; font-weight: normal; color: #222; }
.menu input { appearance: none; width: 12px; height: 12px; border: 1px solid #555; }
mark { padding: 4px 0 0 2px; margin-left: -2px; background: #f5f500; color: inherit; }
.pair { display: grid; grid-template-columns: 199px 1fr; gap: 11px; margin-top: 14px; }
.pair input { height: 36px; min-width: 0; border: 1px solid #a9b4c8; border-radius: 6px; }
.pair.labels { margin: 0; }
.bar { width: 15px; display: flex; flex-direction: column; align-items: center; padding: 1px 0; background: #f0f0f2; color: #505050; }
.bar svg { width: 12px; height: 12px; }
.bar .up { rotate: 180deg; }
.bar i { width: 15px; height: 75px; margin: 123px 0 auto; background: #cdcdcf; }
.submit { width: calc(100% - 22px); height: 36px; margin-top: 22px; border-radius: 18px; background: #08bff2; color: #fff; font-size: 13px; font-weight: 600; }
```
